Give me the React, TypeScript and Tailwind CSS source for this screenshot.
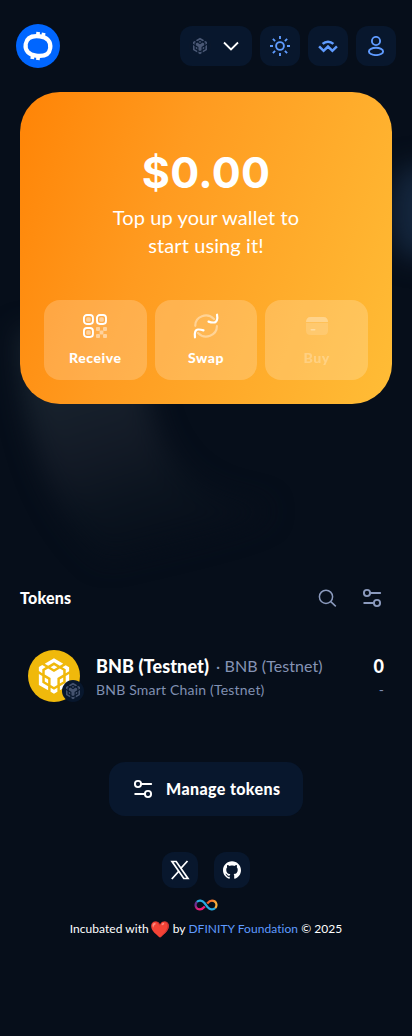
import type { ReactNode } from 'react';
import { SiGithub } from 'react-icons/si';

const BNB_PATH =
  'M685.7 1250l.9 330.2 280.6 165.1v193.3l-444.7-260.7v-524.2zM685.7 919.8v192.4l-163.2-96.6v-192.4l163.2-96.6 164.1 96.6zM1086.1 823.9l163.2-96.6 164.1 96.6-164.1 96.6zM805.4 1509.6v-193.3l163.2 96.6v192.4zM1086 1814.1l163.2 96.6 164.1-96.6v192.4l-164.1 96.6-163.2-96.6zM1650.1 823.9l163.2-96.6 164.1 96.6v192.4l-164.1 96.6v-192.4zM1813.4 1580.2l.9-330.2 163.2-96.6v524.2l-444.7 260.7v-193.3zM1693.3 1509.6l-163.2 95.7v-192.4l163.2-96.6zM1693.3 990.4l.9 193.3-281.5 165.1v331l-163.2 95.7-163.2-95.7v-331l-281.5-165.1v-193.3l165.9-96.6 277.7 166 281.5-166 165.1 96.6zM804.5 663.8l444.7-261.6 444.7 261.6-163.2 96.6-281.5-166-281.5 166z';

function BnbMark({ className }: { className: string }) {
  return (
    <svg viewBox="0 0 2500 2500" className={className} fill="currentColor">
      <path d={BNB_PATH} />
    </svg>
  );
}

function Logo() {
  return (
    <svg viewBox="0 0 44 44" className="size-11">
      <circle cx="22" cy="22" r="22" fill="#0066ff" />
      <g stroke="#fff" fill="none">
        <path
          d="M9.7 20C10.8 13.200 16.500 11.300 24 12.300C31.200 13.300 35.200 17.500 34.200 24.200C33.200 30.800 27.500 32.700 20 31.700C12.800 30.700 8.700 26.700 9.700 20Z"
          strokeWidth="4.200"
        />
        <path d="M22.2 8.1l-.5 4M27.7 8.900l-.7 4M16.800 31l-.6 4M22.400 32l-.6 4" strokeWidth="3.700" />
      </g>
    </svg>
  );
}

function Sun() {
  return (
    <svg viewBox="0 0 20 20" className="size-5" fill="none" stroke="#5f9bff" strokeWidth="1.900">
      <circle cx="10" cy="10" r="3.900" />
      <path d="M10 0v3M10 17v3M0 10h3M17 10h3M2.900 2.900l2.200 2.200M14.900 14.900l2.200 2.200M2.900 17.100l2.200-2.200M14.900 5.100l2.200-2.200" />
    </svg>
  );
}

function WalletConnect() {
  return (
    <svg viewBox="0 0 20 20" className="size-5" fill="none" stroke="#5f9bff" strokeWidth="2.500">
      <path d="M4.600 7.900C7.700 4.900 12.300 4.900 15.400 7.900M1.100 10.400l4.500 4.400L10 10.500l4.400 4.300 4.500-4.400" />
    </svg>
  );
}

function User() {
  return (
    <svg viewBox="0 0 20 20" className="size-5" fill="none" stroke="#5f9bff" strokeWidth="1.900">
      <circle cx="10" cy="5" r="4.100" />
      <ellipse cx="10" cy="15.400" rx="7.100" ry="3.700" />
    </svg>
  );
}

function Sliders({ className }: { className: string }) {
  return (
    <svg viewBox="0 0 20 20" className={className} fill="none" stroke="currentColor" strokeWidth="1.900" strokeLinecap="round">
      <circle cx="5" cy="5" r="3.100" />
      <circle cx="15" cy="15" r="3.100" />
      <path d="M8.200 5h10M2.200 15h9.600" />
    </svg>
  );
}

function QrIcon() {
  return (
    <svg viewBox="0 0 24 24" className="size-6" fill="none" stroke="#fff" strokeWidth="1.900">
      <rect x=".95" y=".95" width="9" height="9" rx="2.900" />
      <rect x="14" y=".95" width="9" height="9" rx="2.900" />
      <rect x=".95" y="14" width="9" height="9" rx="2.900" />
      <g fill="#fff" stroke="none" opacity=".45">
        <rect x="3.200" y="3.200" width="4.500" height="4.500" rx="1.500" />
        <rect x="16.300" y="3.200" width="4.500" height="4.500" rx="1.500" />
        <rect x="3.200" y="16.300" width="4.500" height="4.500" rx="1.500" />
        <rect x="13" y="13" width="4" height="4" rx="1" />
        <rect x="20" y="13" width="4" height="4" rx="1" />
        <rect x="16.600" y="16.600" width="3.800" height="3.800" rx="1" />
        <rect x="13" y="20" width="4" height="4" rx="1" />
        <rect x="20" y="20" width="4" height="4" rx="1" />
      </g>
    </svg>
  );
}

function SwapIcon() {
  return (
    <svg viewBox="0 0 26 26" className="size-[26px]" fill="none" stroke="#fff" strokeWidth="2.200" strokeLinecap="round" strokeLinejoin="round">
      <path opacity=".4" d="M2.300 12.800C2.100 3.600 14-1.200 21 6M23.900 13.200C24 22.400 12 27.200 5 20" />
      <path d="M24 1.700c.9 4-.2 7.700-3 7.800-2 .1-3.900-.3-5.500-.9M2 24.300c-.7-4 .2-7.700 3-7.800 2-.1 3.900.3 5.500.9" />
    </svg>
  );
}

function CardIcon() {
  return (
    <svg viewBox="0 0 22 18" className="h-[18px] w-[22px]" fill="#fff">
      <path opacity=".31" d="M0 5C0 2 1.500 0 4.500 0h13c3 0 4.500 2 4.500 5z" />
      <path opacity=".14" d="M0 6h22v7.500c0 3-1.500 4.500-4.500 4.500h-13C1.500 18 0 16.500 0 13.500z" />
      <rect x="4.500" y="12" width="5" height="1.600" rx=".8" opacity=".35" />
    </svg>
  );
}

function HeaderButton({ children }: { children: ReactNode }) {
  return <button className="flex size-10 items-center justify-center rounded-xl bg-[#08172d]">{children}</button>;
}

function Action({ icon, label, disabled = false }: { icon: ReactNode; label: string; disabled?: boolean }) {
  return (
    <button
      disabled={disabled}
      className="flex h-20 flex-col items-center rounded-2xl bg-white/20 pt-[13px] text-white"
    >
      <span className="flex h-[26px] items-center justify-center">{icon}</span>
      <span className={disabled ? 'mt-[9px] text-sm leading-5 font-black tracking-[.55px] opacity-25' : 'mt-[9px] text-sm leading-5 font-black tracking-[.55px]'}>
        {label}
      </span>
    </button>
  );
}

function Backdrop() {
  return (
    <svg viewBox="0 0 412 1036" className="pointer-events-none absolute inset-0 h-full w-full">
      <defs>
        <filter id="soft" x="-100%" y="-50%" width="300%" height="200%" colorInterpolationFilters="sRGB">
          <feGaussianBlur stdDeviation="13" />
        </filter>
        <linearGradient id="fade" x1="60" y1="380" x2="120" y2="570" gradientUnits="userSpaceOnUse">
          <stop offset="0" stopColor="#18232e" />
          <stop offset=".4" stopColor="#131a26" />
          <stop offset=".7" stopColor="#0a131e" />
          <stop offset="1" stopColor="#070e1a" />
        </linearGradient>
      </defs>
      <path d="M18 330H142C145 440 175 490 250 502C310 514 210 535 105 560C45 510 20 420 18 330Z" fill="url(#fade)" filter="url(#soft)" />
      <ellipse cx="416" cy="212" rx="26" ry="48" fill="#14263d" filter="url(#soft)" />
    </svg>
  );
}

function Infinity() {
  return (
    <svg viewBox="0 0 24 12" className="h-3 w-6" fill="none" strokeWidth="2.200">
      <defs>
        <linearGradient id="warm" x1="12" y1="0" x2="23" y2="7" gradientUnits="userSpaceOnUse">
          <stop offset=".25" stopColor="#f15a24" />
          <stop offset=".8" stopColor="#fbb03b" />
        </linearGradient>
        <linearGradient id="violet" x1="3" y1="1" x2="10" y2="10" gradientUnits="userSpaceOnUse">
          <stop offset=".25" stopColor="#6b2f91" />
          <stop offset=".7" stopColor="#ed1e79" />
        </linearGradient>
      </defs>
      <path d="M2.800 3C4.800 .8 8 1.200 10.500 4L13.500 8C16 10.800 19.200 11.200 21.200 9" stroke="#29abe2" />
      <path d="M10.800 7.500C9 9.700 7.800 10.400 6 10.400C2 10.400 .2 6 2.800 3" stroke="url(#violet)" />
      <path d="M13.200 4.500C15 2.300 16.200 1.600 18 1.600C22 1.600 23.800 6 21.200 9" stroke="url(#warm)" />
    </svg>
  );
}

export default function App() {
  return (
    <div className="relative h-[1036px] w-full overflow-hidden bg-[#060e1a] font-['Lato','Noto_Color_Emoji',sans-serif] text-white">
      <Backdrop />
      <div className="relative flex h-full flex-col">
        <header className="flex h-[92px] items-center justify-between px-4">
          <Logo />
          <div className="flex gap-2">
            <button className="flex h-10 w-[72px] items-center rounded-xl bg-[#08172d] pl-[9px]">
              <span className="flex size-[22px] items-center justify-center rounded-full border border-[#0b182c]">
                <BnbMark className="size-[24px] shrink-0 text-[#4a5875]" />
              </span>
              <svg viewBox="0 0 16 10" className="ml-3 h-[10px] w-4" fill="none" stroke="#fff" strokeWidth="1.800">
                <path d="M1 1.500l7 7 7-7" />
              </svg>
            </button>
            <HeaderButton><Sun /></HeaderButton>
            <HeaderButton><WalletConnect /></HeaderButton>
            <HeaderButton><User /></HeaderButton>
          </div>
        </header>

        <main className="flex flex-col">
          <section className="mx-5 flex h-[312px] flex-col rounded-[40px] bg-linear-[110deg,#ff8406_0%,#ff9b20_38%,#ffbd36_100%] px-6 pt-[54px]">
            <div className="text-center font-['Inter',sans-serif] text-[43px] leading-[52px] font-bold tracking-[.3px]">$0.00</div>
            <p className="mt-[5px] text-center text-xl leading-7 tracking-[.1px]">
              Top up your wallet to
              <br />
              start using it!
            </p>
            <div className="mt-[41px] grid grid-cols-3 gap-2">
              <Action icon={<QrIcon />} label="Receive" />
              <Action icon={<SwapIcon />} label="Swap" />
              <Action icon={<CardIcon />} label="Buy" disabled />
            </div>
          </section>

          <section className="mt-[174px] flex h-10 items-center justify-between pr-[30px] pl-5">
            <h2 className="text-base leading-6 font-black tracking-[.2px]">Tokens</h2>
            <div className="flex items-center gap-[25px] text-[#8b9abd]">
              <svg viewBox="0 0 20 20" className="size-5" fill="none" stroke="currentColor" strokeWidth="1.500">
                <circle cx="9" cy="8.800" r="6.600" />
                <path d="M13.800 13.600l5 4.800" />
              </svg>
              <Sliders className="size-5" />
            </div>
          </section>

          <section className="mt-8 flex h-[52px] items-center px-7">
            <div className="relative size-[52px] rounded-full bg-[#f0b90b]">
              <BnbMark className="size-[52px]" />
              <span className="absolute top-[30px] left-[34px] flex size-[22px] items-center justify-center rounded-full bg-[#08172d] text-[#45536f]">
                <BnbMark className="size-[24px] shrink-0" />
              </span>
            </div>
            <div className="ml-4 flex flex-1 flex-col pt-[3px]">
              <div className="flex items-center leading-6">
                <span className="text-lg leading-6 font-black tracking-[.1px]">BNB (Testnet)</span>
                <span className="ml-[7px] text-base leading-6 tracking-[.08px] text-[#8593b4]">· BNB (Testnet)</span>
              </div>
              <span className="text-sm leading-6 tracking-[.2px] text-[#8090b2]">BNB Smart Chain (Testnet)</span>
            </div>
            <div className="flex flex-col pt-[3px] text-right">
              <span className="text-lg leading-6 font-black">0</span>
              <span className="text-sm leading-6 text-[#8090b2]">-</span>
            </div>
          </section>

          <button className="mt-[60px] flex h-[54px] w-[194px] items-center gap-3 self-center rounded-2xl bg-[#08172d] pl-6 text-base font-black tracking-[.38px]">
            <Sliders className="size-5" />
            <span className="ml-px whitespace-nowrap">Manage tokens</span>
          </button>
        </main>

        <footer className="mt-9 flex flex-col items-center">
          <div className="flex gap-4">
            <a className="flex size-9 items-center justify-center rounded-xl bg-[#08172d]">
              <svg viewBox="0 0 20 20" className="size-5" fill="none" stroke="#fff">
                <path strokeWidth="1.700" d="M2 1.500h4.200L18 18.500h-4.200z" />
                <path strokeWidth="1.800" d="M17.500 1l-6.800 7.500M1.800 19l7.200-8" />
              </svg>
            </a>
            <a className="flex size-9 items-center justify-center rounded-xl bg-[#08172d]">
              <SiGithub className="size-[18px]" />
            </a>
          </div>
          <div className="mt-[11px]"><Infinity /></div>
          <p className="mt-2 flex h-5 items-center text-xs tracking-[.05px] whitespace-pre">
            <span>Incubated with</span>
            <span className="mx-[2px] text-base leading-5 tracking-normal">❤️</span>
            <span>by </span>
            <span className="text-[#5f9bff]">DFINITY Foundation</span>
            <span> © 2025</span>
          </p>
        </footer>
      </div>
    </div>
  );
}
